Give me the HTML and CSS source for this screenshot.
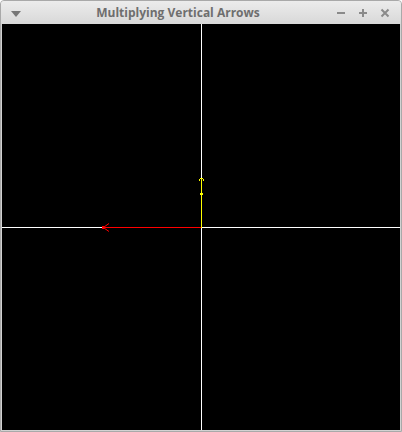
FILE: index.html
```html
<!DOCTYPE html>
<html>
<head>
<meta charset="utf-8">
<link rel="stylesheet" href="styles.css">
</head>
<body>
<div class="window">
  <div class="titlebar">
    <div class="menu-btn"><svg width="10" height="6" viewBox="0 0 10 6"><path d="M0 0 H10 L5 6 Z" fill="#777"/></svg></div>
    <div class="title">Multiplying Vertical Arrows</div>
    <div class="controls">
      <span class="ctl"><svg width="10" height="10" viewBox="0 0 10 10"><rect x="1" y="4" width="8" height="2" fill="#8a8a8a"/></svg></span>
      <span class="ctl"><svg width="10" height="10" viewBox="0 0 10 10"><rect x="1" y="4" width="8" height="2" fill="#8a8a8a"/><rect x="4" y="1" width="2" height="8" fill="#8a8a8a"/></svg></span>
      <span class="ctl"><svg width="10" height="10" viewBox="0 0 10 10"><path d="M1.5 1.5 L8.5 8.5 M8.5 1.5 L1.5 8.5" stroke="#8a8a8a" stroke-width="2"/></svg></span>
    </div>
  </div>
  <div class="canvas">
    <svg class="plot" width="398" height="406" viewBox="0 0 398 406">
      <g shape-rendering="crispEdges">
        <line x1="199.5" y1="0" x2="199.5" y2="406" stroke="#fff" stroke-width="1"/>
        <line x1="0" y1="203.5" x2="398" y2="203.5" stroke="#fff" stroke-width="1"/>
        <line x1="199.5" y1="154" x2="199.5" y2="204" stroke="#ffff00" stroke-width="1"/>
        <rect x="198" y="169" width="3" height="2" fill="#ffff00"/>
        <line x1="101" y1="203.5" x2="199" y2="203.5" stroke="#ff0000" stroke-width="1"/>
        <rect x="100" y="202" width="2" height="3" fill="#ff0000"/>
        <rect x="197" y="155" width="1" height="2" fill="#ffff00"/>
        <rect x="198" y="154" width="1" height="1" fill="#ffff00"/>
        <rect x="200" y="154" width="1" height="1" fill="#ffff00"/>
        <rect x="201" y="155" width="1" height="2" fill="#ffff00"/>
      </g>
      <path d="M107 199.5 L102 203 M107 207.5 L102 204" fill="none" stroke="#ff0000" stroke-width="1"/>
    </svg>
  </div>
</div>
</body>
</html>
```

FILE: styles.css
```css
html, body {
  margin: 0;
  padding: 0;
  background: #ffffff;
}
.window {
  width: 402px;
  height: 432px;
  box-sizing: border-box;
  background: #d2d2d2;
  border: 1px solid #a9a9a9;
  border-radius: 4px 4px 0 0;
  display: flex;
  flex-direction: column;
  overflow: hidden;
}
.titlebar {
  height: 23px;
  flex: none;
  display: flex;
  align-items: center;
  background: linear-gradient(#ececec, #d8d8d8);
  font-family: "Open Sans", "DejaVu Sans", sans-serif;
}
.menu-btn {
  width: 30px;
  display: flex;
  justify-content: center;
  align-items: center;
  padding-top: 2px;
}
.title {
  flex: 1;
  text-align: center;
  font-weight: bold;
  font-size: 12px;
  color: #6e6e6e;
  white-space: nowrap;
}
.controls {
  width: 76px;
  display: flex;
  gap: 12px;
  align-items: center;
  padding-left: 11px;
  box-sizing: border-box;
}
.ctl {
  display: flex;
  width: 10px;
  height: 10px;
}
.canvas {
  flex: 1;
  margin: 0 1px 1px 1px;
  background: #000;
  display: flex;
}
.plot {
  display: block;
}
```
